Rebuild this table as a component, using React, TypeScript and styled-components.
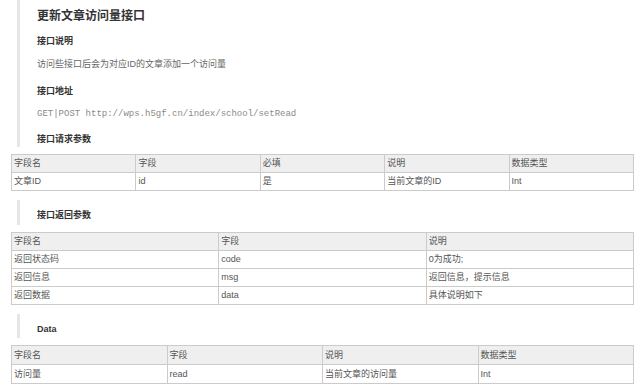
import styled, { createGlobalStyle } from 'styled-components';

const GlobalStyle = createGlobalStyle`
  body {
    margin: 0;
    background: #fff;
    font-family: "Liberation Sans", "Noto Sans CJK SC", sans-serif;
  }
`;

const Page = styled.div`
  width: 640px;
  height: 389px;
  box-sizing: border-box;
  padding: 0 6px 0 11px;
  overflow: hidden;
`;

const Block = styled.div<{ $top?: number; $pad?: string }>`
  margin: ${(p) => p.$top ?? 0}px 0 0 6px;
  padding: ${(p) => p.$pad ?? '0'};
  padding-left: 17px;
  border-left: 3px solid #e6e6e6;
`;

const Title = styled.h2`
  margin: 0;
  padding-top: 6px;
  font-size: 12px;
  line-height: 20px;
  font-weight: bold;
  color: #333;
`;

const Heading = styled.h4<{ $top?: number }>`
  margin: ${(p) => p.$top ?? 0}px 0 0;
  font-size: 9px;
  line-height: 16px;
  font-weight: bold;
  color: #333;
`;

const Text = styled.p`
  margin: 7px 0 0;
  font-size: 9px;
  line-height: 16px;
  color: #666;
`;

const Code = styled.p`
  margin: 7px 0 0;
  font-family: "Liberation Mono", monospace;
  font-size: 9px;
  line-height: 16px;
  color: #8a8a8a;
`;

const Table = styled.table<{ $row?: number }>`
  margin-top: 7px;
  width: 100%;
  border-collapse: collapse;
  table-layout: fixed;
  font-size: 9px;
  color: #555;

  td {
    border: 1px solid #cbcbcb;
    padding: 0 2px;
    line-height: ${(p) => p.$row ?? 17}px;
    height: ${(p) => p.$row ?? 17}px;
    white-space: nowrap;
    overflow: hidden;
  }

  thead td {
    background: #efefef;
  }
`;

type Rows = string[][];

const DataTable = ({ head, rows, row }: { head: string[]; rows: Rows; row?: number }) => (
  <Table $row={row}>
    <thead>
      <tr>
        {head.map((h) => (
          <td key={h}>{h}</td>
        ))}
      </tr>
    </thead>
    <tbody>
      {rows.map((r, i) => (
        <tr key={i}>
          {r.map((c, j) => (
            <td key={j}>{c}</td>
          ))}
        </tr>
      ))}
    </tbody>
  </Table>
);

const App = () => {
  return (
    <>
      <GlobalStyle />
      <Page>
        <Block>
          <Title>更新文章访问量接口</Title>
          <Heading $top={7}>接口说明</Heading>
          <Text>访问些接口后会为对应ID的文章添加一个访问量</Text>
          <Heading $top={11}>接口地址</Heading>
          <Code>GET|POST http://wps.h5gf.cn/index/school/setRead</Code>
          <Heading $top={9}>接口请求参数</Heading>
        </Block>
        <DataTable
          head={['字段名', '字段', '必填', '说明', '数据类型']}
          rows={[['文章ID', 'id', '是', '当前文章的ID', 'Int']]}
        />

        <Block $top={9} $pad="7px 0 2px">
          <Heading>接口返回参数</Heading>
        </Block>
        <DataTable
          head={['字段名', '字段', '说明']}
          rows={[
            ['返回状态码', 'code', '0为成功;'],
            ['返回信息', 'msg', '返回信息，提示信息'],
            ['返回数据', 'data', '具体说明如下'],
          ]}
        />

        <Block $top={9} $pad="7px 0 1px">
          <Heading>Data</Heading>
        </Block>
        <DataTable
          row={18}
          head={['字段名', '字段', '说明', '数据类型']}
          rows={[['访问量', 'read', '当前文章的访问量', 'Int']]}
        />
      </Page>
    </>
  );
};

export default App;
